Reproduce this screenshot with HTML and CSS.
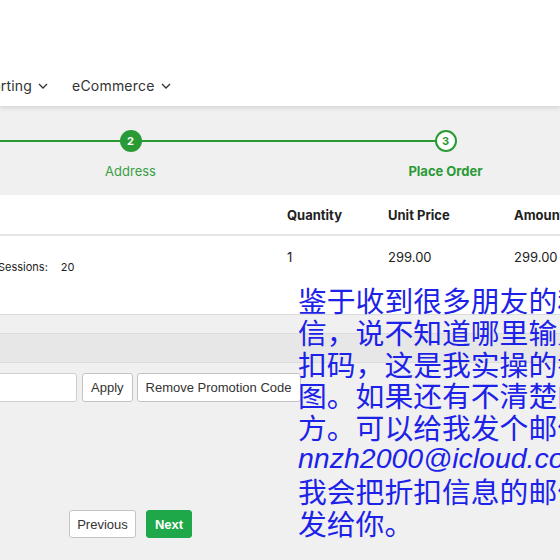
FILE: index.html
```html
<!DOCTYPE html>
<html lang="en">
  <head>
    <meta charset="UTF-8" />
    <meta name="viewport" content="width=device-width, initial-scale=1.0" />
    <title>Checkout</title>
    <link rel="stylesheet" href="styles.css">
  </head>
  <body>
    <div class="header">
      <ul class="nav">
        <li class="nav-item first">Reporting
          <svg class="chev" width="10" height="6" viewBox="0 0 10 6"><polyline points="1,1 5,5 9,1" /></svg>
        </li>
        <li class="nav-item">eCommerce
          <svg class="chev" width="10" height="6" viewBox="0 0 10 6"><polyline points="1,1 5,5 9,1" /></svg>
        </li>
      </ul>
    </div>

    <div class="steps">
      <div class="step done">
        <span class="circle">1</span>
        <span class="label">Cart</span>
      </div>
      <div class="step done">
        <span class="circle">2</span>
        <span class="label">Address</span>
      </div>
      <div class="step current">
        <span class="circle">3</span>
        <span class="label">Place Order</span>
      </div>
    </div>

    <div class="order-table">
      <div class="row head">
        <div class="cell product">Product</div>
        <div class="cell">Quantity</div>
        <div class="cell">Unit Price</div>
        <div class="cell">Amount</div>
      </div>
      <div class="row item">
        <div class="cell product">
          <div class="meta"><span>Sessions:</span><span>20</span></div>
        </div>
        <div class="cell">1</div>
        <div class="cell">299.00</div>
        <div class="cell">299.00</div>
      </div>
    </div>
    <div class="subtotal"></div>
    <div class="total"></div>

    <div class="promo">
      <input type="text" class="promo-input" />
      <button class="btn">Apply</button>
      <button class="btn">Remove Promotion Code</button>
    </div>

    <div class="pager">
      <button class="btn">Previous</button>
      <button class="btn next">Next</button>
    </div>

    <div class="note">
      <div>鉴于收到很多朋友的私</div>
      <div>信，说不知道哪里输入折</div>
      <div>扣码，这是我实操的截</div>
      <div>图。如果还有不清楚的地</div>
      <div>方。可以给我发个邮件</div>
      <div class="mail">nnzh2000@icloud.com</div>
      <div>我会把折扣信息的邮件</div>
      <div>发给你。</div>
    </div>
  </body>
</html>
```

FILE: styles.css
```css
html,
body {
  margin: 0;
  width: 560px;
  height: 560px;
  overflow: hidden;
}
body {
  position: relative;
  font-family: Inter, "Liberation Sans", sans-serif;
  background-color: #f0f0f0;
  color: #222;
}

.header {
  height: 106px;
  background-color: #ffffff;
  box-shadow: 0 2px 5px rgba(0, 0, 0, 0.12);
  position: relative;
  z-index: 2;
}
.nav {
  list-style: none;
  margin: 0;
  padding: 76px 0 0 0;
  display: flex;
  gap: 24px;
}
.nav-item {
  font-size: 14px;
  line-height: 20px;
  color: #333;
  display: flex;
  align-items: center;
  gap: 6px;
  letter-spacing: 0.2px;
}
.nav-item.first {
  margin-left: -34px;
}
.chev polyline {
  fill: none;
  stroke: #333;
  stroke-width: 1.3;
}

.steps {
  display: flex;
  margin-left: -342px;
  padding-top: 24px;
  height: 65px;
}
.step {
  width: 315px;
  flex-shrink: 0;
  display: flex;
  flex-direction: column;
  align-items: center;
  position: relative;
}
.step + .step::before {
  content: "";
  position: absolute;
  top: 10px;
  right: 50%;
  width: 315px;
  height: 2px;
  background-color: #2a9a36;
}
.circle {
  position: relative;
  z-index: 1;
  width: 22px;
  height: 22px;
  box-sizing: border-box;
  border-radius: 50%;
  background-color: #2a9a36;
  color: #fff;
  font-size: 11px;
  font-weight: 700;
  display: flex;
  align-items: center;
  justify-content: center;
}
.current .circle {
  background-color: #fff;
  border: 2px solid #2a9a36;
  color: #2a9a36;
}
.label {
  margin-top: 11px;
  font-size: 13px;
  line-height: 16px;
  color: #3a9e46;
}
.current .label {
  font-weight: 700;
  color: #2a9a36;
}

.order-table {
  background-color: #fff;
}
.row {
  display: grid;
  grid-template-columns: 287px 101px 126px 1fr;
}
.head {
  height: 39px;
  align-items: center;
  border-bottom: 2px solid #e6e6e6;
  font-size: 13px;
  font-weight: 700;
}
.head .product {
  visibility: hidden;
}
.item {
  height: 78px;
  border-bottom: 1px solid #dcdcdc;
  font-size: 13px;
}
.item .cell {
  padding-top: 13px;
}
.meta {
  margin-top: 11px;
  display: flex;
  gap: 13px;
  font-size: 11px;
}
.meta span:first-child {
  margin-left: -2px;
}

.subtotal {
  height: 18px;
  border-bottom: 1px solid #dcdcdc;
}
.total {
  height: 28px;
  background-color: #e7e7e7;
  border-bottom: 1px solid #dcdcdc;
}

.promo {
  display: flex;
  gap: 4px;
  margin-top: 10px;
  margin-left: -20px;
}
.promo-input {
  width: 97px;
  height: 29px;
  box-sizing: border-box;
  border: 1px solid #cfcfcf;
  border-radius: 3px;
  background-color: #fff;
  margin-right: 1px;
}
.btn {
  height: 29px;
  box-sizing: border-box;
  padding: 0 8px;
  border: 1px solid #c4c4c4;
  border-radius: 3px;
  background-color: #fff;
  color: #333;
  font-family: "Liberation Sans", Arial, sans-serif;
  font-size: 13px;
}

.pager {
  display: flex;
  gap: 10px;
  margin-top: 108px;
  margin-left: 69px;
}
.pager .btn {
  height: 28px;
  width: 67px;
  padding: 0;
}
.pager .next {
  width: 46px;
  background-color: #1ea84a;
  border-color: #1ea84a;
  color: #fff;
  font-weight: 700;
}

.note {
  position: absolute;
  left: 298px;
  top: 284px;
  z-index: 3;
  font-family: "Noto Sans CJK SC", sans-serif;
  font-size: 28.8px;
  line-height: 31.8px;
  color: #1c22e8;
  white-space: nowrap;
}
.note .mail {
  font-family: "Liberation Sans", Arial, sans-serif;
  font-style: italic;
  font-size: 28.5px;
}
```
